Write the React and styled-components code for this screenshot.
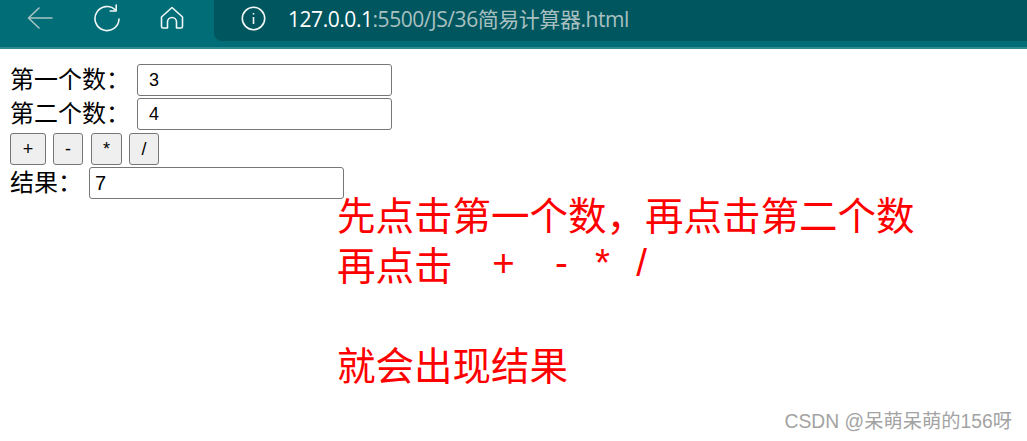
import React from 'react';
import styled, { createGlobalStyle } from 'styled-components';

const cjk = `"Liberation Sans", "Noto Sans CJK SC", sans-serif`;

const GlobalStyle = createGlobalStyle`
  html, body {
    margin: 0;
    background: #fff;
  }
  body {
    font-family: ${cjk};
    color: #000;
    overflow: hidden;
  }
`;

const Page = styled.div`
  position: relative;
  width: 1027px;
  height: 441px;
  overflow: hidden;
`;

const Toolbar = styled.header`
  display: flex;
  align-items: flex-start;
  height: 47px;
  background: #006d77;
  border-bottom: 2px solid #2f8a94;
`;

const NavIcons = styled.nav`
  display: flex;
  width: 214px;
  flex: none;
  height: 36px;
  align-items: center;
`;

const NavIcon = styled.svg`
  flex: none;
  margin-left: ${(p) => p.$left}px;
  fill: none;
  stroke: ${(p) => (p.$dim ? '#a9c3c4' : '#f1f7f7')};
  stroke-width: 1.6;
  stroke-linecap: round;
  stroke-linejoin: round;
`;

const AddressBar = styled.div`
  box-sizing: border-box;
  flex: 1;
  height: 41px;
  display: flex;
  align-items: center;
  background: #00565e;
  border-bottom-left-radius: 8px;
  padding: 0 0 5px 27px;
`;

const InfoIcon = styled.svg`
  flex: none;
  fill: none;
  stroke: #f1f7f7;
  stroke-width: 1.6;
  margin-right: 22px;
`;

const Url = styled.span`
  font-family: "Open Sans", "Noto Sans CJK SC", sans-serif;
  font-size: 21px;
  letter-spacing: -0.45px;
  color: #a9c0c1;
  white-space: nowrap;
`;

const Host = styled.span`
  color: #fff;
`;

const Form = styled.main`
  display: flex;
  flex-direction: column;
  gap: 2px;
  padding: 15px 0 0 10px;
`;

const Row = styled.div`
  display: flex;
  align-items: center;
  height: 32px;
`;

const Label = styled.label`
  font-size: 24px;
  width: ${(p) => p.$width}px;
  flex: none;
  padding-bottom: 5px;
  font-family: ${cjk};
`;

const Field = styled.input`
  box-sizing: border-box;
  width: 255px;
  height: 32px;
  padding: 0 ${(p) => p.$pad}px;
  border: 1px solid #767676;
  border-radius: 3px;
  font-family: ${cjk};
  font-size: ${(p) => p.$size}px;
  color: #000;
  background: #fff;
  outline: none;
`;

const Buttons = styled.div`
  display: flex;
  height: 32px;
  margin-top: 1px;
`;

const OpButton = styled.button`
  box-sizing: border-box;
  width: ${(p) => p.$width}px;
  height: 32px;
  margin-right: ${(p) => p.$gap}px;
  padding: 0;
  border: 1px solid #767676;
  border-radius: 3px;
  background: #efefef;
  font-family: ${cjk};
  font-size: 18px;
  color: #000;
`;

const Note = styled.div`
  position: absolute;
  left: 337px;
  top: 188px;
  color: #f00;
  font-size: 38.5px;
  line-height: 50px;
  font-family: "Noto Sans CJK SC", sans-serif;
`;

const NoteLine = styled.div`
  display: flex;
  align-items: center;
  height: 50px;
  margin-bottom: ${(p) => p.$after || 0}px;
  white-space: nowrap;
`;

const NoteOp = styled.span`
  width: 30px;
  margin-left: ${(p) => p.$left}px;
  text-align: center;
  font-family: "Liberation Sans", sans-serif;
`;

const Watermark = styled.div`
  position: absolute;
  right: 15px;
  top: 411px;
  color: #a3a3a3;
  font-size: 19.3px;
  line-height: 22px;
  white-space: nowrap;
  font-family: "Liberation Sans", "Noto Sans CJK SC", sans-serif;
`;

export default function App() {
  return (
    <Page>
      <GlobalStyle />
      <Toolbar>
        <NavIcons>
          <NavIcon $dim $left={27} width="26" height="24" viewBox="0 0 26 24">
            <path d="M25 12H2M12 2 1.5 12 12 22" />
          </NavIcon>
          <NavIcon $left={40} width="28" height="28" viewBox="0 0 28 28">
            <path d="M22.6 6.2A12 12 0 1 0 26 15" />
            <path d="M23.2 1v6h-6" />
          </NavIcon>
          <NavIcon $left={39} width="24" height="24" viewBox="0 0 24 24">
            <path d="M1.5 11 12 1.5 22.5 11v9.5a1.5 1.5 0 0 1-1.5 1.5h-4.5v-6a4.5 4.5 0 0 0-9 0v6H3a1.5 1.5 0 0 1-1.5-1.5z" />
          </NavIcon>
        </NavIcons>
        <AddressBar>
          <InfoIcon width="25" height="25" viewBox="0 0 25 25">
            <circle cx="12.5" cy="12.5" r="11.2" />
            <path d="M12.5 11v7M12.5 7v1.6" />
          </InfoIcon>
          <Url>
            <Host>127.0.0.1</Host>:5500/JS/36简易计算器.html
          </Url>
        </AddressBar>
      </Toolbar>
      <Form>
        <Row>
          <Label $width={127}>第一个数：</Label>
          <Field $pad={11} $size={18} defaultValue="3" />
        </Row>
        <Row>
          <Label $width={127}>第二个数：</Label>
          <Field $pad={11} $size={18} defaultValue="4" />
        </Row>
        <Buttons>
          <OpButton $width={36} $gap={7}>+</OpButton>
          <OpButton $width={30} $gap={8}>-</OpButton>
          <OpButton $width={31} $gap={7}>*</OpButton>
          <OpButton $width={30} $gap={0}>/</OpButton>
        </Buttons>
        <Row>
          <Label $width={79}>结果：</Label>
          <Field $pad={5} $size={20} defaultValue="7" />
        </Row>
      </Form>
      <Note>
        <NoteLine>先点击第一个数，再点击第二个数</NoteLine>
        <NoteLine $after={50}>
          再点击
          <NoteOp $left={36}>+</NoteOp>
          <NoteOp $left={28}>-</NoteOp>
          <NoteOp $left={11}>*</NoteOp>
          <NoteOp $left={9}>/</NoteOp>
        </NoteLine>
        <NoteLine>就会出现结果</NoteLine>
      </Note>
      <Watermark>CSDN @呆萌呆萌的156呀</Watermark>
    </Page>
  );
}
